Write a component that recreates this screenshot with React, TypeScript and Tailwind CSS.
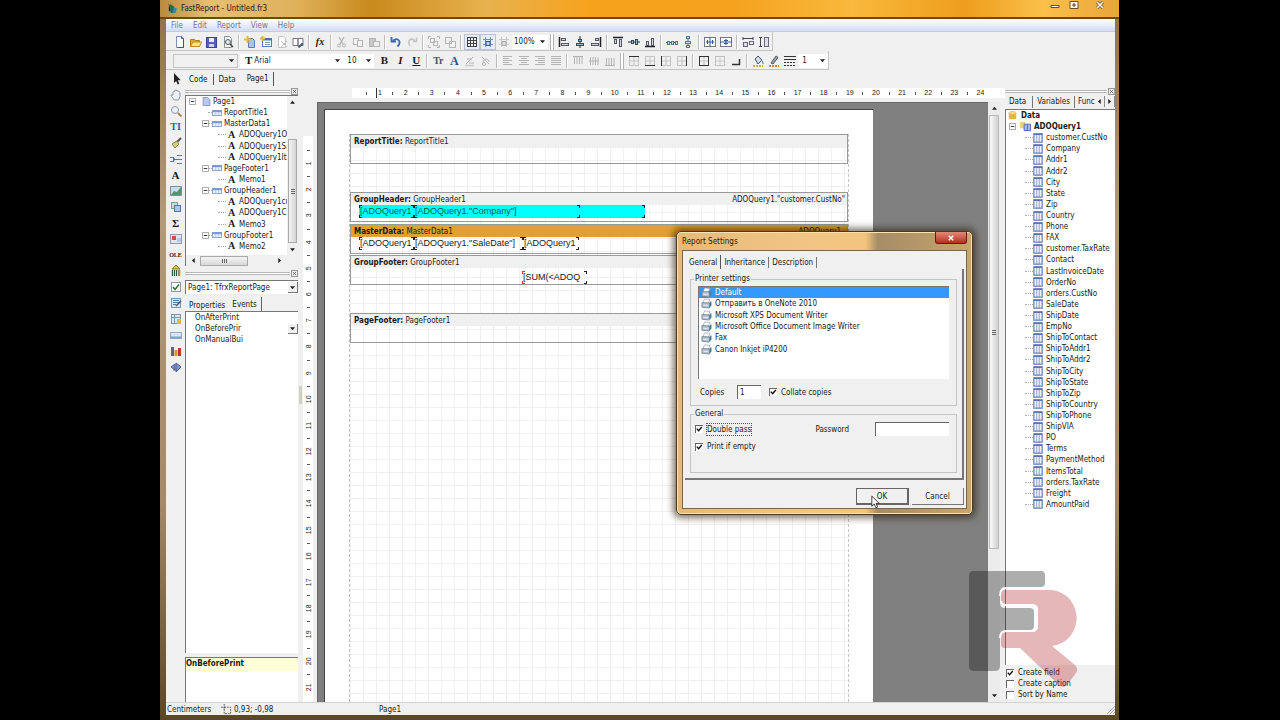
import type { ReactNode } from "react";

const B = "#4a6fa5";
const G = "#b4b4b4";
const K = "#222222";

const box = (c: string, x: number, y: number, w: number, h: number, fill = "none") => (
  <rect x={x + 0.5} y={y + 0.5} width={w - 1} height={h - 1} stroke={c} fill={fill} />
);
const line = (c: string, d: string, w = 1) => <path d={d} stroke={c} strokeWidth={w} fill="none" />;

const sheet = (c: string) => <path d="M2.5.5h5l2 2v9h-7z" fill="#fff" stroke={c} />;

const ICONS: Record<string, ReactNode> = {
  new: <>{sheet("#7d8fb5")}<path d="M7.5.5v2h2M9.500 3v8.500h-6" stroke="#3c5486" fill="none" /></>,
  open: <><path d="M.5 3.500h4l1 1h4v6h-9z" fill="#e0a93c" stroke="#b07a1a" /><path d="M.5 10.500 3 6h8.500l-2 4.500z" fill="#ffe08a" stroke="#c08f2c" /></>,
  save: <><rect x=".5" y="1.500" width="10" height="10" fill="#5560b8" stroke="#3b4390" /><rect x="3" y="2" width="5" height="4" fill="#e8ecff" /><rect x="3" y="8" width="5" height="3" fill="#cfd4f4" /></>,
  preview: <>{sheet("#8a8f99")}<circle cx="6" cy="6" r="2.500" fill="#dfe9f5" stroke="#555" /><path d="m8 8 3 3" stroke="#444" strokeWidth="1.500" /></>,
  newpage: <><path d="M4.500 2.500h4l2 2v7h-6z" fill="#a9c4ec" stroke="#5a7db5" /><path d="M3.500 0v7M0 3.500h7" stroke="#e8b93a" strokeWidth="2" /></>,
  newdlg: <>{box("#5a7db5", 2, 2, 10, 9, "#fff")}<path d="M2.500 3.500h9" stroke={B} strokeWidth="2" /><path d="M5 6.500h5M5 8.500h5" stroke="#89a" /><path d="M2.500 0v5M0 2.500h5" stroke="#e8b93a" strokeWidth="2" /></>,
  delpage: <>{sheet("#c4c4c4")}<path d="m5 5 6 6m0-6-6 6" stroke="#b8b8b8" /></>,
  pagesettings: <><path d="M1 2.500h5v7H1zM6 2.500h5v7H6z" fill="#fff" stroke="#778" /><path d="m6 11 4-4 1 1-3.500 3.500z" fill={B} stroke={K} strokeWidth=".5" /></>,
  cut: <><path d="m3 1 4 7M8 1 4 8" stroke={G} strokeWidth="1.300" /><circle cx="3" cy="9.500" r="1.500" fill="none" stroke={G} /><circle cx="8" cy="9.500" r="1.500" fill="none" stroke={G} /></>,
  copy: <>{box(G, 1, 2, 6, 7, "#f4f4f4")}{box(G, 5, 4, 6, 7, "#f4f4f4")}</>,
  paste: <>{box(G, 1, 2, 7, 9, "#c8c8c8")}{box(G, 5, 5, 7, 6, "#eee")}</>,
  undo: <path d="M3 4.500c5-3.500 9 1.500 4.500 6M1.500 1v4.500H6" fill="none" stroke="#3d67b5" strokeWidth="1.800" />,
  redo: <path d="M9 4.500c-5-3.500-8 1-5 5M10.500 1.500v4H7" fill="none" stroke="#c2c2c2" strokeWidth="1.500" />,
  group: <>{line(G, "M.5 3v-2.500H3M9 .5h2.500V3M.5 9v2.500H3M9 11.500h2.500V9")}{box(G, 2, 2, 5, 5)}{box(G, 5, 5, 5, 5)}</>,
  ungroup: <>{box(G, 1, 1, 7, 7)}{box(G, 5, 5, 7, 7)}</>,
  grid: line("#444", "M1 1.500h10M1 4.500h10M1 7.500h10M1 10.500h10M1.500 1v10M4.500 1v10M7.500 1v10M10.500 1v10"),
  snap: <>{line("#6f8fc0", "M1 3.500h10M1 8.500h10M3.500 1v10M8.500 1v10")}<path d="M4 5.500h4v4H4z" fill="#bcd0ee" stroke="#345b9c" /></>,
  snapg: <>{line("#c8c8c8", "M1 3.500h10M1 8.500h10M3.500 1v10M8.500 1v10")}<path d="M4 5.500h4v4H4z" fill="#ddd" stroke="#aaa" /></>,
  al: <>{line(K, "M1.500 1v10", 1.5)}{box("#556", 3, 2, 5, 3, "#cdd")}{box("#556", 3, 7, 8, 3, "#cdd")}</>,
  ac: <>{line(K, "M6 0v12")}{box("#346", 4, 3, 4, 3, "#9bd")}{box("#346", 2, 7, 8, 3, "#9bd")}</>,
  ar: <>{line(K, "M10.500 1v10", 1.5)}{box("#556", 5, 2, 4, 3, "#cdd")}{box("#556", 1, 7, 8, 3, "#cdd")}</>,
  at: <>{line(K, "M1 1.500h10", 1.5)}{box("#556", 2, 3, 3, 5, "#cdd")}{box("#556", 7, 3, 3, 8, "#cdd")}</>,
  am: <>{line(K, "M0 6h12")}{box("#346", 3, 4, 3, 4, "#9bd")}{box("#346", 7, 3, 3, 6, "#9bd")}</>,
  ab: <>{line(K, "M1 10.500h10", 1.5)}{box("#556", 2, 5, 3, 5, "#cdd")}{box("#556", 7, 2, 3, 8, "#cdd")}</>,
  sh: <>{line(B, "M0 6.500h12")}{box(B, 1, 5, 3, 4, "#dde8f8")}{box(B, 5, 5, 3, 4, "#dde8f8")}{box(B, 9, 5, 3, 4, "#dde8f8")}</>,
  sv: <>{line(B, "M6 0v12")}{box(B, 4, 0, 4, 3, "#dde8f8")}{box(B, 3, 5, 6, 3, "#dde8f8")}{box(B, 4, 9, 4, 3, "#dde8f8")}</>,
  ch: <>{box("#778", 0, 1, 12, 10, "#fff")}{line("#345b9c", "M6 1v10M2 6h8M3.500 4v4M8.500 4v4")}</>,
  cv: <>{box("#778", 0, 1, 12, 10, "#fff")}{line("#345b9c", "M0 6h12M6 3v6M4 4.500h4M4 7.500h4")}</>,
  sw: <>{line("#445", "M1 2.500h10M1 1v3M11 1v3")}{box("#667", 1, 6, 5, 5, "#dde")}{box("#667", 7, 5, 5, 4)}</>,
  sz: <>{line("#445", "M2.500 1v10M1 1.500h3M1 10.500h3")}{box("#667", 6, 1, 5, 10, "#dde")}</>,
  tl: line(G, "M1 1.500h9M1 3.500h6M1 5.500h9M1 7.500h6M1 9.500h9"),
  tc: line(G, "M1 1.500h10M3 3.500h6M1 5.500h10M3 7.500h6M1 9.500h10"),
  tr: line(G, "M1 1.500h10M4 3.500h7M1 5.500h10M4 7.500h7M1 9.500h10"),
  tj: line(G, "M1 1.500h10M1 3.500h10M1 5.500h10M1 7.500h10M1 9.500h10"),
  vt: line(G, "M1 1.500h10M2.500 2v7M5 2v7M7.500 2v7M10 2v7"),
  vm: line(G, "M1 6h10M2.500 2v8M5 2v8M7.500 2v8M10 2v8"),
  vb: line(G, "M1 10.500h10M2.500 3v7M5 3v7M7.500 3v7M10 3v7"),
  ft: <>{line("#c4c4c4", "M1.500 2v9M10.500 2v9M1 10.500h10M6 2v9M1 6h10")}{line("#333", "M1 1.500h10")}</>,
  fb: <>{line("#c4c4c4", "M1.500 1v9M10.500 1v9M1 1.500h10M6 1v9M1 6h10")}{line("#333", "M1 10.500h10")}</>,
  fl: <>{line("#c4c4c4", "M2 1.500h9M2 10.500h9M10.500 1v10M6 1v10M1 6h10")}{line("#333", "M1.500 1v10")}</>,
  fr: <>{line("#c4c4c4", "M1 1.500h9M1 10.500h9M1.500 1v10M6 1v10M1 6h10")}{line("#333", "M10.500 1v10")}</>,
  fa: <>{box("#333", 1, 1, 10, 10)}{line("#c4c4c4", "M6 2v8M2 6h8")}</>,
  fn: <>{box("#c0c0c0", 1, 1, 10, 10)}{line("#ccc", "M6 2v8M2 6h8")}</>,
  shadow: line("#333", "M2 9.500h8M9.500 4v6", 1.5),
  fill: <><path d="m3 4 3-3 4 4-4 4z" fill="#cfdcf0" stroke="#456" /><path d="M9 5c2 1 2 3 2 4" stroke={B} fill="none" /><path d="M1 11h10" stroke="#c9b24a" strokeWidth="2" strokeDasharray="2 1" /></>,
  pen: <><path d="m3 8 5-7 2 1.500L5 9z" fill="#9ab" stroke="#555" /><path d="M1 11h10" stroke="#c9843a" strokeWidth="2" strokeDasharray="2 1" /></>,
  style: <>{line("#333", "M0 1.500h12M0 4.500h12")}<path d="M0 7.500h12M0 10.500h12" stroke="#333" strokeDasharray="2 1" /></>,
  hl: <><path d="M2 9 9 2M3 4h5M5 8h5" stroke={G} /><path d="M1 10.500h9" stroke="#ccc" strokeWidth="1.500" /></>,
  rot: <><path d="M2 2 9 9M3 8c0-5 6-5 6-1" stroke={G} fill="none" /><circle cx="4" cy="9" r="1.500" fill="none" stroke={G} /></>,
  arrow: <path d="M4 0v10l2.200-2 1.500 3.500 1.600-.7L7.800 7.300h3z" fill={K} />,
  hand: <path d="M3 6V3l1.500-.5V1.500L6 1l1 .7 1.500.3.500 1 1 .5v4L8.500 11h-4L1.500 7.500 1 6z" fill="#eef1f7" stroke="#8a94a8" />,
  zoom: <><circle cx="5" cy="5" r="3.500" fill="#e8f0f8" stroke="#99a" /><path d="m8 8 3.500 3.500" stroke="#a87b4a" strokeWidth="1.800" /></>,
  brush: <><path d="M11 1 6 6" stroke="#555" strokeWidth="2" /><path d="M7 4 2 7l3 4 4-4z" fill="#d6cf78" stroke="#8b8650" /></>,
  insband: <>{line("#678", "M0 4.500h4M0 8.500h4M5 6.500h7M7 2.500h5M7 10.500h5")}<path d="m3 4 2.500 2.500L3 9z" fill={B} /></>,
  pic: <><path d="M.5 1.500h11v9H.5z" fill="#c8dff0" stroke="#889" /><path d="m1 10 3-4 3 1 4-5v8z" fill="#4c9a6c" /></>,
  sub: <>{box("#6a8", 1, 1, 7, 7, "#bfe3cf")}{box("#57a", 4, 4, 7, 7, "#a9c6ec")}</>,
  chartred: <>{box("#99a", 0, 1, 12, 10, "#dde3f4")}<path d="M2 3h4v4H2z" fill="#c45050" /><path d="M7 5h4v4H7z" fill="#b8c8e8" /></>,
  bar: <><path d="m6 0 4 4H2z" fill="#d9c84a" stroke="#787830" /><path d="M1 5h10v6H1z" fill="#e9dc9a" /><path d="M2.500 5v6M4.500 5v6M6.500 5v6M9 5v6" stroke="#353" /></>,
  chk: <>{box("#89a", 1, 1, 10, 10, "#fff")}<path d="m3 6 2 2.500L9 3.500" stroke="#287a35" strokeWidth="1.500" fill="none" /></>,
  rich: <>{box("#79a", 1, 1, 10, 10, "#dce6f5")}<path d="M3 3.500h6M3 5.500h6M3 7.500h3" stroke="#57a" /><path d="m6 9 5-5" stroke="#456" strokeWidth="1.500" /></>,
  cross: <>{box("#79a", 1, 1, 10, 10, "#dce6f5")}<path d="M1 4.500h10M4.500 1v10" stroke="#79a" /><path d="M7 6h4v5H7z" fill="#e3b93a" /></>,
  grad: <>{box("#9ab", 0, 3, 12, 7, "#d6e5f8")}<path d="M1 8.500h10" stroke="#7d9fd0" strokeWidth="2" /></>,
  chart: <><path d="M1 2h3v9H1z" fill="#6a5a9c" /><path d="M4.500 5h3v6h-3z" fill="#e0902c" /><path d="M8 3h3v8H8z" fill="#b8392e" /></>,
  map: <><path d="m1 6 4-3v6zM6 2l5 4-5 5z" fill="#8296cc" stroke="#4a5a94" /><path d="M3 9h4" stroke="#667" /></>,
  page: <path d="M1.500.5h6l3 3v8h-9z" fill="#b9c8ee" stroke="#7080b8" />,
  band: <><rect x=".5" y="3" width="11" height="6" fill="#eaf1fb" stroke="#7a97c4" /><rect x="0" y="2.500" width="12" height="2.500" fill="#7a9bd0" /><path d="M4.500 5v4M8 5v4" stroke="#a9bddd" /></>,
  db: <><path d="M1 2.500v7c0 2 10 2 10 0v-7z" fill="#e0b63c" /><ellipse cx="6" cy="2.500" rx="5" ry="2" fill="#f8e08c" stroke="#c79b2a" strokeWidth=".6" /></>,
  query: <><path d="M0 1h6v7H0z" fill="#ead27a" /><path d="M4.500 3.500h7v7h-7z" fill="#a9bdec" stroke="#4a63ad" /><path d="M8 4v7" stroke="#4a63ad" /></>,
  field: <><rect x="1" y="1" width="10" height="10" fill="#eef3fd" stroke="#6b82b8" strokeWidth="1.500" /><path d="M1 1.500h10" stroke="#5069a8" strokeWidth="1.500" /><path d="M4.500 2v9M7.500 2v9" stroke="#6b82b8" strokeWidth=".8" /></>,
  printer: <><path d="m4 1 6 .5-2 4H2z" fill="#fff" stroke="#8a9aa8" strokeWidth=".7" /><path d="m1 5 8 .5 2-1.500v4l-2 3-8-1z" fill="#b4c4cf" stroke="#5f7686" strokeWidth=".8" /><path d="M9 6v4.500l2-2.500V4z" fill="#3f7c96" /><path d="M2.500 8h5" stroke="#eef" /></>,
};

const Ic = ({ n, s = "size-3" }: { n: string; s?: string }) => (
  <svg viewBox="0 0 12 12" className={`${s} shrink-0`} aria-hidden="true">{ICONS[n]}</svg>
);

const Tool = ({ n, on }: { n: string; on?: boolean }) => (
  <button type="button" aria-label={n} className={`flex h-4 w-4 shrink-0 items-center justify-center ${on ? "border border-[#b9c3d6] bg-[#e6edf8]" : ""}`}>
    <Ic n={n} />
  </button>
);
const Glyph = ({ children, label, cls }: { children: ReactNode; label: string; cls: string }) => (
  <button type="button" aria-label={label} className={`flex h-4 w-4 shrink-0 items-center justify-center leading-none ${cls}`}>{children}</button>
);
const Sep = () => <span className="mx-[2px] h-[14px] w-[2px] shrink-0 border-l border-[#bcbcbc] bg-white" />;
const Edge = () => <span className="mx-[2px] flex h-4 w-1 shrink-0 border-x border-[#b4b4b4] bg-white" />;
const Tools = ({ names }: { names: string[] }) => <>{names.map((n) => <Tool key={n} n={n} />)}</>;

const Caret = ({ d = "down" }: { d?: "down" | "up" | "left" | "right" }) => (
  <svg viewBox="0 0 6 6" className="size-[5px] shrink-0" aria-hidden="true">
    <path d={{ down: "M0 1.500h6L3 5z", up: "M0 4.500h6L3 1z", left: "M4.500 0v6L1 3z", right: "M1.500 0v6L5 3z" }[d]} fill="#222" />
  </svg>
);

const Combo = ({ label, value, cls, boxed }: { label: string; value: string; cls: string; boxed?: boolean }) => (
  <span className={`relative flex h-[14px] shrink-0 items-center ${cls}`}>
    <select aria-label={label} defaultValue={value} className="h-full w-full appearance-none bg-transparent pl-[2px] outline-none">
      <option value={value}>{value}</option>
    </select>
    <span className={`pointer-events-none absolute flex items-center justify-center ${boxed ? "right-0 h-[11px] w-[10px] border-r border-b border-[#777] bg-[#f0f0f0]" : "right-[3px]"}`}><Caret /></span>
  </span>
);

const Check = ({ label, on, focus }: { label: string; on?: boolean; focus?: boolean }) => (
  <label className="flex items-center gap-1">
    <span className="grid size-[8px] shrink-0">
      <input type="checkbox" defaultChecked={on} className="peer col-start-1 row-start-1 size-[8px] appearance-none border-t border-l border-[#666] bg-white" />
      <svg viewBox="0 0 8 8" className="pointer-events-none invisible col-start-1 row-start-1 size-[8px] peer-checked:visible" aria-hidden="true">
        <path d="m1.800 3.600 1.800 2L6.800 2" stroke="#111" strokeWidth="1.400" fill="none" />
      </svg>
    </span>
    <span className={focus ? "outline-1 outline-dotted outline-[#555]" : ""}>{label}</span>
  </label>
);

const Grip = () => (
  <div className="flex h-[7px] w-full items-center gap-px">
    <span className="h-[3px] flex-1 border-y border-[#b8b8b8] bg-white" />
    <button type="button" aria-label="Close panel" className="flex size-[7px] items-center justify-center border border-[#999]">
      <svg viewBox="0 0 6 6" className="size-[5px]"><path d="m1 1 4 4m0-4L1 5" stroke="#555" /></svg>
    </button>
  </div>
);

const Minus = () => (
  <svg viewBox="0 0 8 8" className="size-[7px] shrink-0" aria-hidden="true"><path d="M.5.5h7v7h-7z" fill="#fff" stroke="#999" /><path d="M2 4h4" stroke="#222" /></svg>
);

const TREE: [number, string, string][] = [
  [0, "page", "Page1"], [1, "band", "ReportTitle1"], [2, "band", "MasterData1"], [3, "A", "ADOQuery1O"], [3, "A", "ADOQuery1Sa"],
  [3, "A", "ADOQuery1It"], [2, "band", "PageFooter1"], [3, "A", "Memo1"], [2, "band", "GroupHeader1"], [3, "A", "ADOQuery1cu"],
  [3, "A", "ADOQuery1C"], [3, "A", "Memo3"], [2, "band", "GroupFooter1"], [3, "A", "Memo2"],
];
const FIELDS = "customer.CustNo,Company,Addr1,Addr2,City,State,Zip,Country,Phone,FAX,customer.TaxRate,Contact,LastInvoiceDate,OrderNo,orders.CustNo,SaleDate,ShipDate,EmpNo,ShipToContact,ShipToAddr1,ShipToAddr2,ShipToCity,ShipToState,ShipToZip,ShipToCountry,ShipToPhone,ShipVIA,PO,Terms,PaymentMethod,ItemsTotal,orders.TaxRate,Freight,AmountPaid".split(",");
const TOOLBOX = ["arrow", "hand", "zoom", "TI", "brush", "insband", "A", "pic", "sub", "Σ", "chartred", "OLE", "bar", "chk", "rich", "cross", "grad", "chart", "map"];

const Toolbars = () => (
  <div className="h-[38px] shrink-0 bg-[#f0f0f0]">
    <div className="flex h-[19px] w-fit items-center border-r border-b border-[#c4c4c4] pt-px pl-[6px]">
      <Tools names={["new", "open", "save", "preview"]} /><Sep />
      <Tools names={["newpage", "newdlg", "delpage", "pagesettings"]} /><Sep />
      <Glyph label="Variables" cls="font-['Liberation_Serif',serif] text-[10px] font-bold italic">fx</Glyph><Sep />
      <Tools names={["cut", "copy", "paste"]} /><Sep />
      <Tools names={["undo", "redo"]} /><Sep />
      <Tools names={["group", "ungroup"]} /><Sep />
      <Tool n="grid" on /><Tool n="snap" on /><Tool n="snapg" />
      <Combo label="Zoom" value="100%" cls="w-9 bg-white" /><Edge />
      <Tools names={["al", "ac", "ar"]} /><Sep />
      <Tools names={["at", "am", "ab"]} /><Sep />
      <Tools names={["sh", "sv"]} /><Sep />
      <Tools names={["ch", "cv"]} /><Sep />
      <Tools names={["sw", "sz"]} />
    </div>
    <div className="flex h-[19px] w-fit items-center border-r border-b border-[#c4c4c4] pt-px pl-[7px]">
      <Combo label="Style" value="" cls="w-[65px] border border-[#c4c4c4]" />
      <span className="ml-[2px] flex items-center bg-white pl-[5px]">
        <span className="font-['Liberation_Serif',serif] text-[11px] leading-none font-bold">T</span>
        <Combo label="Font" value="Arial" cls="w-[91px]" />
        <Combo label="Font size" value="10" cls="w-[31px] pl-[2px]" />
      </span>
      <Glyph label="Bold" cls="ml-[2px] font-['Liberation_Serif',serif] text-[11px] font-bold">B</Glyph>
      <Glyph label="Italic" cls="font-['Liberation_Serif',serif] text-[11px] font-bold italic">I</Glyph>
      <Glyph label="Underline" cls="font-['Liberation_Serif',serif] text-[11px] font-bold underline">U</Glyph><Sep />
      <Glyph label="Font settings" cls="font-['Liberation_Serif',serif] text-[10px] font-bold text-[#456]">Tr</Glyph>
      <Glyph label="Font color" cls="font-['Liberation_Serif',serif] text-[12px] font-bold text-[#2b4f8c]">A</Glyph>
      <Tools names={["hl", "rot"]} /><Sep />
      <Tools names={["tl", "tc", "tr", "tj"]} /><Sep />
      <Tools names={["vt", "vm", "vb"]} /><Edge />
      <Tools names={["ft", "fb", "fl", "fr"]} /><Sep />
      <Tools names={["fa", "fn", "shadow"]} /><Sep />
      <Tools names={["fill", "pen", "style"]} />
      <Combo label="Line width" value="1" cls="w-[30px] bg-white pl-[2px]" />
    </div>
  </div>
);

const LeftPanel = () => (
  <aside className="flex w-[113px] shrink-0 flex-col">
    <Grip />
    <div className="flex h-[171px] border-t border-l border-[#777] bg-white">
      <div className="flex min-w-0 flex-1 flex-col">
        <ul className="grid h-[156px] auto-rows-fr">
          {TREE.map(([d, icon, text]) => (
            <li key={text} className={`flex items-center whitespace-nowrap ${["pl-[3px]", "pl-[22px]", "pl-[16px]", "pl-[32px]"][d]}`}>
              {(d === 0 || d === 2) && <Minus />}
              {d > 0 && <span className={`border-t border-dotted border-[#aaa] ${d === 2 ? "w-[3px]" : d === 1 ? "w-1" : "w-2"}`} />}
              {icon === "A" ? <b className="w-[11px] text-center font-['Liberation_Serif',serif] text-[10px] leading-none">A</b> : <span className={d === 0 ? "ml-[6px] flex" : "flex"}><Ic n={icon} s={d === 0 ? "size-[9px]" : "size-[10px]"} /></span>}
              <span className="ml-[2px]">{text}</span>
            </li>
          ))}
        </ul>
        <div className="mt-auto flex h-[11px] items-center bg-[#f0f0f0] px-[5px]">
          <Caret d="left" />
          <span className="mr-auto ml-1 flex h-[10px] w-12 items-center justify-center gap-px border border-[#aaa] bg-gradient-to-b from-[#f4f4f4] to-[#d8d8d8]">
            <i className="h-1 w-px bg-[#666]" /><i className="h-1 w-px bg-[#666]" /><i className="h-1 w-px bg-[#666]" />
          </span>
          <Caret d="right" />
        </div>
      </div>
      <div className="relative flex w-[11px] flex-col items-center bg-[#f0f0f0] py-1">
        <Caret d="up" />
        <span className="mt-[34px] flex h-[104px] w-[9px] flex-col items-center justify-center gap-px border border-[#aaa] bg-gradient-to-r from-[#f4f4f4] to-[#d4d4d4]">
          <i className="h-px w-1 bg-[#666]" /><i className="h-px w-1 bg-[#666]" /><i className="h-px w-1 bg-[#666]" />
        </span>
        <span className="mt-1 flex"><Caret /></span>
      </div>
    </div>
    <div className="mt-[4px]"><Grip /></div>
    <Combo label="Object" value="Page1: TfrxReportPage" cls="mt-[3px] border-t border-l border-[#777] bg-white" boxed />
    <div role="tablist" className="mt-[3px] flex h-[14px] items-center gap-[7px] pl-[4px]">
      <button role="tab" type="button" className="pt-[2px]">Properties</button>
      <button role="tab" type="button" aria-selected="true" className="h-full border-r border-[#666] pr-[4px]">Events</button>
    </div>
    <ul className="min-h-0 flex-1 border-t border-l border-[#777] bg-white leading-[11px]">
      <li className="pl-[9px]">OnAfterPrint</li>
      <li className="flex items-center pl-[9px]">
        <span>OnBeforePrir</span>
        <button type="button" aria-label="Handlers" className="ml-auto flex h-[10px] w-[10px] items-center justify-center border-r border-b border-[#777] bg-[#f0f0f0]"><Caret /></button>
      </li>
      <li className="pl-[9px]">OnManualBui</li>
    </ul>
    <div className="mt-1 h-[45px] border-t border-l border-[#777] bg-white"><div className="h-[13px] bg-[#ffffd8] font-bold">OnBeforePrint</div></div>
  </aside>
);

const RightPanel = () => (
  <aside className="flex w-[110px] shrink-0 flex-col">
    <div className="flex h-[6px] items-center"><Grip /></div>
    <div role="tablist" className="flex h-[15px] items-center pl-[4px]">
      <button role="tab" type="button" aria-selected="true" className="mr-[6px] h-full">Data</button>
      <button role="tab" type="button" className="h-[12px] border-l border-[#777] px-[4px]">Variables</button>
      <button role="tab" type="button" className="h-[12px] border-l border-[#777] pl-[3px]">Func</button>
      <button type="button" aria-label="Previous tab" className="flex h-[11px] w-[11px] items-center justify-center border-r border-[#888]"><Caret d="left" /></button>
      <button type="button" aria-label="Next tab" className="flex h-[11px] w-[11px] items-center justify-center border-r border-[#888]"><Caret d="right" /></button>
    </div>
    <div className="min-h-0 flex-1 overflow-hidden border-t border-l border-[#777] bg-white">
      <ul className="grid h-[400px] auto-rows-fr">
        <li className="flex items-center gap-1 pl-[2px] font-bold"><Ic n="db" s="size-[9px]" />Data</li>
        <li className="flex items-center pl-[3px] font-bold"><Minus /><span className="ml-[4px] flex"><Ic n="query" s="size-[11px]" /></span><span className="ml-[3px]">ADOQuery1</span></li>
        {FIELDS.map((f) => (
          <li key={f} className="ml-[19px] flex items-center">
            <span className="w-[8px] border-t border-dotted border-[#aaa]" /><Ic n="field" s="size-[10px]" /><span className="ml-[3px]">{f}</span>
          </li>
        ))}
      </ul>
    </div>
    <div className="flex h-[37px] shrink-0 flex-col justify-center pl-px leading-[11px]">
      <Check label="Create field" on /><Check label="Create caption" /><Check label="Sort by Name" />
    </div>
  </aside>
);

const Memo = ({ cls, children, mark = "border-[#222]" }: { cls: string; children?: ReactNode; mark?: string }) => (
  <div className={`absolute flex h-[13px] items-center pl-px whitespace-nowrap font-['Liberation_Sans',sans-serif] text-[9px] ${cls}`}>
    <i className={`absolute top-0 left-0 size-[3px] border-t border-l ${mark}`} />
    <i className="absolute top-0 right-0 size-[3px] border-t border-r border-[#222]" />
    <i className={`absolute bottom-0 left-0 size-[3px] border-b border-l ${mark}`} />
    <i className="absolute right-0 bottom-0 size-[3px] border-r border-b border-[#222]" />
    {children}
  </div>
);

const Band = ({ kind, name, cls, head = "bg-[#f0f0f0]", right, children }: { kind: string; name: string; cls: string; head?: string; right?: ReactNode; children?: ReactNode }) => (
  <section className={`relative border border-[#999] ${cls}`}>
    <header className={`flex h-[12px] items-center justify-between pr-[2px] pl-[3px] ${head}`}>
      <span><b>{kind}:</b> {name}</span>{right}
    </header>
    {children}
  </section>
);

const Designer = () => (
  <main className="flex min-w-0 flex-1 flex-col">
    <div className="ml-[49px] flex h-[10px] bg-white pr-[12px] pl-[14px] font-['Liberation_Sans',sans-serif] text-[7px] leading-[10px]">
      {Array.from({ length: 24 }, (_, i) => (
        <span key={i} className="flex flex-1 items-center"><i className="h-[3px] w-px bg-[#555]" /><span className={`flex-1 text-center ${i === 0 ? "ml-[9px] border-l border-[#333] pr-[9px]" : ""}`}>{i + 1}</span></span>
      ))}
    </div>
    <div className="mt-1 flex min-h-0 flex-1">
      <div className="mt-[34px] mr-1 flex w-[10px] flex-col bg-white pt-[14px] pb-[2px] font-['Liberation_Sans',sans-serif] text-[7px]">
        {Array.from({ length: 21 }, (_, i) => (
          <span key={i} className="flex min-h-0 flex-1 flex-col items-center"><i className="h-px w-[3px] shrink-0 bg-[#555]" /><span className="flex flex-1 rotate-180 items-center justify-center leading-none [writing-mode:vertical-rl]">{i + 1}</span></span>
        ))}
      </div>
      <div className="flex min-w-0 flex-1 overflow-hidden border-t border-l border-[#666] bg-[#808080] pt-[6px] pl-[6px]">
        <div className="w-[549px] shrink-0 border-t border-l border-[#444] bg-white px-[24px] pt-[24px]">
          <div className="flex h-full flex-col border-x border-dashed border-[#c4c4c4] bg-[linear-gradient(to_right,#f0f0f0_1px,transparent_1px),linear-gradient(to_bottom,#f0f0f0_1px,transparent_1px)] bg-[size:13px_13px]">
            <Band kind="ReportTitle" name="ReportTitle1" cls="h-[30px]" />
            <Band kind="GroupHeader" name="GroupHeader1" cls="mt-[28px] h-[30px]" right={<span>ADOQuery1."customer.CustNo"</span>}>
              <Memo cls="left-[8px] w-[286px] bg-[#00ffff]" />
              <Memo cls="left-[8px] w-[55px] text-[#055]">[ADOQuery1</Memo>
              <Memo cls="left-[63px] w-[166px] text-[#055]">[ADOQuery1."Company"]</Memo>
            </Band>
            <Band kind="MasterData" name="MasterData1" head="bg-[#dfa230]" cls="mt-[2px] h-[30px]" right={<span className="mr-1">ADOQuery1</span>}>
              <Memo cls="left-[8px] w-[55px]">[ADOQuery1</Memo>
              <Memo cls="left-[63px] w-[109px]">[ADOQuery1."SaleDate"]</Memo>
              <Memo cls="left-[172px] w-[56px]">[ADOQuery1</Memo>
            </Band>
            <Band kind="GroupFooter" name="GroupFooter1" cls="mt-px h-[30px]">
              <Memo cls="top-[15px] left-[171px] w-[65px]" mark="border-[#c33]">[SUM(&lt;ADOQ</Memo>
            </Band>
            <Band kind="PageFooter" name="PageFooter1" cls="mt-[28px] h-[30px]" />
          </div>
        </div>
      </div>
      <div className="mr-[5px] flex w-[12px] flex-col items-center bg-[#ececec] py-1">
        <Caret d="up" />
        <span className="mt-1 flex w-[10px] basis-[434px] flex-col items-center justify-center gap-px border border-[#bbb] bg-gradient-to-r from-[#fafafa] to-[#d0d0d0]">
          <i className="h-px w-1 bg-[#666]" /><i className="h-px w-1 bg-[#666]" /><i className="h-px w-1 bg-[#666]" />
        </span>
        <span className="mt-auto flex"><Caret /></span>
      </div>
    </div>
  </main>
);

const PRINTERS = ["Default", "Отправить в OneNote 2010", "Microsoft XPS Document Writer", "Microsoft Office Document Image Writer", "Fax", "Canon Inkjet iP4200"];

const Dialog = () => (
  <div role="dialog" aria-label="Report Settings" className="absolute top-[231px] left-[676px] w-[297px] rounded-[5px] border border-[#4a3a20] bg-[linear-gradient(to_right,#e6b978,#f1c684_45%,#f3c47c_64%,#a58d66_68%,#c9a66c_100%)] px-[5px] pb-[5px] shadow-[0_0_7px_3px_rgba(40,25,10,0.6),inset_0_0_0_1px_#ffe2b0]">
    <div className="flex h-[18px] items-center justify-between">
      <span>Report Settings</span>
      <button type="button" aria-label="Close" className="mb-1 flex h-[12px] w-8 items-center justify-center self-start rounded-b-[3px] border border-t-0 border-[#6b1a12] bg-gradient-to-b from-[#e08a78] to-[#b8281a]">
        <svg viewBox="0 0 8 8" className="size-[6px]"><path d="m1 1 6 6m0-6L1 7" stroke="#fff" strokeWidth="2" /></svg>
      </button>
    </div>
    <div className="border border-[#7a6748] bg-[#f0f0f0] px-[2px] pt-[4px] pb-[3px]">
      <div role="tablist" className="flex h-[14px] items-center">
        <button role="tab" type="button" aria-selected="true" className="h-full border-r border-[#555] pr-[3px] pl-[4px]">General</button>
        <button role="tab" type="button" className="h-[11px] border-r border-[#777] px-[3px]">Inheritance</button>
        <button role="tab" type="button" className="h-[11px] border-r border-[#777] px-[3px]">Description</button>
      </div>
      <div className="border-r-2 border-b-2 border-[#777] px-[5px] pt-[5px] pb-[5px]">
        <fieldset className="border border-[#c4c4c4] px-[7px] pb-[6px]">
          <legend className="-ml-[4px] px-px leading-[10px]">Printer settings</legend>
          <div className="mt-[2px] h-[93px] border-t border-l border-[#777] bg-white">
            <ul className="grid h-[68px] auto-rows-fr">
              {PRINTERS.map((p, i) => (
                <li key={p} className={`flex items-center gap-[3px] pl-[2px] ${i === 0 ? "bg-[#3399ff] text-white" : ""}`}><Ic n="printer" s="size-[11px]" />{p}</li>
              ))}
            </ul>
          </div>
          <div className="mt-[6px] flex h-[14px] items-center">
            <label htmlFor="copies" className="w-[39px] pl-[2px]">Copies</label>
            <input id="copies" defaultValue="1" className="mr-[8px] h-[14px] w-[24px] border-t border-l border-[#666] bg-white pl-[2px]" />
            <Check label="Collate copies" on />
          </div>
        </fieldset>
        <fieldset className="mt-[3px] h-[64px] border border-[#c4c4c4] px-[4px]">
          <legend className="-ml-px px-px leading-[10px]">General</legend>
          <div className="mt-[3px] flex h-[14px] items-center justify-between pr-[3px]">
            <Check label="Double pass" on focus />
            <span className="flex items-center gap-[26px]">
              <label htmlFor="password">Password</label>
              <input id="password" type="password" className="h-[14px] w-[74px] border-t border-l border-[#666] bg-white" />
            </span>
          </div>
          <div className="mt-[5px]"><Check label="Print if empty" on /></div>
        </fieldset>
      </div>
      <div className="mt-[8px] flex justify-end gap-[3px]">
        <button type="button" className="h-[17px] w-[53px] border border-r-2 border-b-2 border-[#666]">OK</button>
        <button type="button" className="h-[17px] w-[52px] border-r border-b border-[#777]">Cancel</button>
      </div>
    </div>
  </div>
);

export default function App() {
  return (
    <div className="relative flex h-screen min-h-[720px] bg-black pr-[161px] pl-[160px] font-['DejaVu_Sans_Condensed','Noto_Sans',sans-serif] text-[8px] leading-[11px] text-[#1a1a1a]">
      <div className="flex min-w-0 flex-1 flex-col bg-[linear-gradient(to_bottom,#8d7048,#b39a78_30%,#a48a66_70%,#5a4726)] pr-1 pb-[5px] pl-[6px]">
        <header className="-mr-1 -ml-[6px] flex h-[19px] shrink-0 items-center border-b-2 border-[#6b4a12] bg-[linear-gradient(to_right,#b98a3c,#e5bf75_5%,#dfb25c_14%,#c98a1c_22%,#e8b24e_34%,#f7a21c_45%,#f5a31f_60%,#f9b93c_72%,#ee9d1c_84%,#fbc04a_92%,#e9a63c)] pr-[14px] pl-[7px]">
          <svg viewBox="0 0 12 12" className="size-[11px]" aria-hidden="true"><path d="M2 0v9h2L2 0z" fill="#222" /><path d="m3 1 5 3v7H4z" fill="#1f6f3c" /><path d="m7 5 4 1-2 5H6z" fill="#2f8a9a" /></svg>
          <h1 className="ml-[3px]">FastReport - Untitled.fr3</h1>
          <div className="ml-auto flex items-center gap-[9px] pb-[7px]">
            <button type="button" aria-label="Minimize"><svg viewBox="0 0 10 8" className="h-[8px] w-[10px]"><path d="M1 4.500h8v2H1z" fill="#fff" stroke="#6b5020" /></svg></button>
            <button type="button" aria-label="Maximize"><svg viewBox="0 0 10 8" className="h-[8px] w-[10px]"><path d="M1 .5h8v7H1z" fill="#fff" stroke="#6b5020" /><path d="M4 3h2v2H4z" fill="#e9a63c" stroke="#6b5020" /></svg></button>
            <button type="button" aria-label="Close window" className="ml-[7px]"><svg viewBox="0 0 10 8" className="h-[8px] w-[10px]"><path d="m2 1 6 6m0-6L2 7" stroke="#6b5020" strokeWidth="3" /><path d="m2 1 6 6m0-6L2 7" stroke="#fff" strokeWidth="1.500" /></svg></button>
          </div>
        </header>
        <nav className="flex h-[13px] shrink-0 items-center gap-[10px] border-b border-[#c5cbdc] bg-gradient-to-b from-white to-[#d4dcf4] pt-px pl-[5px] text-[#77777f]">
          {["File", "Edit", "Report", "View", "Help"].map((m) => <button type="button" key={m}>{m}</button>)}
        </nav>
        <Toolbars />
        <div className="flex min-h-0 flex-1 bg-[#f0f0f0]">
          <div className="flex w-[19px] shrink-0 flex-col items-center pt-px">
            {TOOLBOX.map((t) => ICONS[t] ? <Tool key={t} n={t} /> : (
              <Glyph key={t} label={t} cls={`font-['Liberation_Serif',serif] font-bold ${t === "OLE" ? "text-[6px]" : t === "TI" ? "text-[10px] text-[#2f62a8]" : "text-[11px]"}`}>{t}</Glyph>
            ))}
          </div>
          <div className="flex min-w-0 flex-1 flex-col">
            <div role="tablist" className="flex h-[18px] shrink-0 items-center pl-[4px]">
              <button role="tab" type="button" className="h-[11px] border-r border-[#555] pr-[6px]">Code</button>
              <button role="tab" type="button" className="h-[11px] px-[4px]">Data</button>
              <button role="tab" type="button" aria-selected="true" className="h-[14px] border-r border-[#555] pr-[4px] pb-[2px] pl-[7px]">Page1</button>
            </div>
            <div className="flex min-h-0 flex-1">
              <LeftPanel />
              <div className="flex w-[5px] shrink-0 items-center pl-px"><span className="h-[18px] w-[3px] bg-[#d2d0c0]" /></div>
              <Designer />
              <RightPanel />
            </div>
          </div>
        </div>
        <footer className="flex h-[13px] shrink-0 items-center border-t border-[#d4d4d4] bg-[#f0f0f0] pl-px">
          <span className="w-[54px]">Centimeters</span>
          <svg viewBox="0 0 12 12" className="size-[11px]" aria-hidden="true"><path d="M3.500 3.500h7v7h-7zM0 3.500h6M3.500 0v6" fill="none" stroke="#555" strokeDasharray="2 1" /></svg>
          <span className="ml-[2px] w-[145px]">0,93; -0,98</span>
          <span>Page1</span>
          <svg viewBox="0 0 9 9" className="ml-auto size-[9px]" aria-hidden="true"><path d="m1 9 8-8M4 9l5-5M7 9l2-2" stroke="#aaa" /></svg>
        </footer>
      </div>
      <Dialog />
      <svg viewBox="0 0 110 118" className="pointer-events-none absolute top-[570px] left-[968px] h-[118px] w-[110px]" aria-hidden="true">
        <path d="M5 1h68q4 0 4 4v8q0 4-4 4H38q-6 0-6 6v10q0 5 5 5h25q4 0 4 4v14q0 4-4 4H38q-6 0-6 6v30q0 5-5 5H6q-5 0-5-5V6q0-5 4-5z" fill="#101010" fillOpacity=".34" />
        <path d="M37 20h42a27 28 0 0 1 5 56l23 19q4 4 1 8l-9 12q-4 4-8 0L52 78H36q-3 0-3-4v-5q0-7 5-7h26q6 0 6-6V40q0-6-6-6H37q-4 0-4-5v-5q0-4 4-4z" fill="#b02024" fillOpacity=".32" />
        <path d="M33 31q1 4 5 4h25q6 0 6 5v15q0 6-6 6H38q-6 0-6 7M32 26q0-8 6-8" stroke="#fff" strokeWidth="2" strokeOpacity=".85" fill="none" />
      </svg>
      <svg viewBox="0 0 12 16" className="pointer-events-none absolute top-[495px] left-[871px] h-[14px] w-[10px]" aria-hidden="true"><path d="M1 1v12l3-2.500 2 4.500 2-1-2-4.300h4z" fill="#fff" stroke="#222" /></svg>
    </div>
  );
}
